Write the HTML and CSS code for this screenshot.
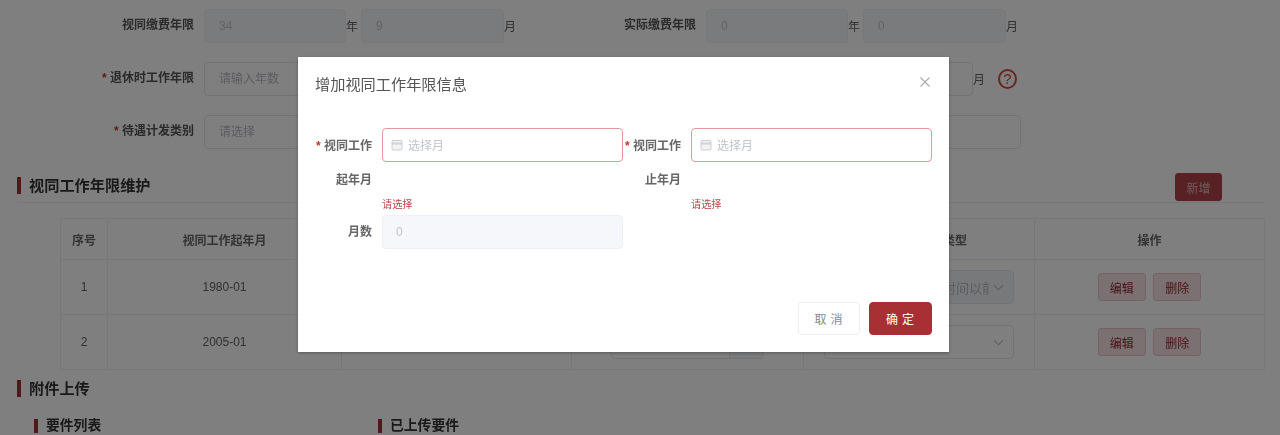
FILE: index.html
```html
<!DOCTYPE html>
<html lang="zh-CN">

<head>
  <title>视同工作年限信息</title>
  <meta charset="utf-8">
  <link rel="stylesheet" href="styles.css">
</head>

<body>
  <div class="screen">
    <div class="page">
      <div class="form-row">
        <label class="form-label">视同缴费年限</label>
        <input class="text-input short" type="text" value="34" disabled>
        <span class="unit">年</span>
        <input class="text-input short-b" type="text" value="9" disabled>
        <span class="unit">月</span>
        <label class="form-label second">实际缴费年限</label>
        <input class="text-input short" type="text" value="0" disabled>
        <span class="unit">年</span>
        <input class="text-input short-b" type="text" value="0" disabled>
        <span class="unit">月</span>
      </div>

      <div class="form-row">
        <label class="form-label"><em>*</em> 退休时工作年限</label>
        <input class="text-input wide" type="text" placeholder="请输入年数">
        <span class="unit">月</span>
        <span class="help-icon">?</span>
      </div>

      <div class="form-row">
        <label class="form-label"><em>*</em> 待遇计发类别</label>
        <input class="text-input wider" type="text" placeholder="请选择">
      </div>

      <div class="section-head">
        <h2 class="section-title">视同工作年限维护</h2>
        <button type="button" class="add-button">新增</button>
      </div>

      <table class="years-table">
        <colgroup>
          <col class="col-no">
          <col class="col-start">
          <col class="col-end">
          <col class="col-months">
          <col class="col-type">
          <col class="col-actions">
        </colgroup>
        <thead>
          <tr>
            <th>序号</th>
            <th>视同工作起年月</th>
            <th>视同工作止年月</th>
            <th>月数</th>
            <th>视同工作年限类型</th>
            <th>操作</th>
          </tr>
        </thead>
        <tbody>
          <tr>
            <td>1</td>
            <td>1980-01</td>
            <td>2004-12</td>
            <td></td>
            <td>
              <div class="cell-select disabled">
                <span class="cell-select-text">视同缴费参加工作时间以前</span>
                <svg class="chevron" viewBox="0 0 12 12"><path d="M1 3.5l5 5 5-5"/></svg>
              </div>
            </td>
            <td>
              <button type="button" class="row-button">编辑</button>
              <button type="button" class="row-button">删除</button>
            </td>
          </tr>
          <tr>
            <td>2</td>
            <td>2005-01</td>
            <td>2014-09</td>
            <td>
              <div class="cell-input"><span class="cell-input-end"></span></div>
            </td>
            <td>
              <div class="cell-select">
                <span class="cell-select-text"></span>
                <svg class="chevron" viewBox="0 0 12 12"><path d="M1 3.5l5 5 5-5"/></svg>
              </div>
            </td>
            <td>
              <button type="button" class="row-button">编辑</button>
              <button type="button" class="row-button">删除</button>
            </td>
          </tr>
        </tbody>
      </table>

      <h2 class="section-title upload-title">附件上传</h2>

      <div class="upload-columns">
        <h3 class="sub-title">要件列表</h3>
        <h3 class="sub-title">已上传要件</h3>
      </div>
    </div>

    <div class="mask"></div>

    <div class="dialog">
      <div class="dialog-head">
        <span class="dialog-title">增加视同工作年限信息</span>
        <svg class="dialog-close" viewBox="0 0 10 10"><path d="M.5.5l9 9M9.5.5l-9 9"/></svg>
      </div>

      <div class="dialog-body">
        <div class="dialog-field">
          <label class="dialog-label"><em>*</em> 视同工作起年月</label>
          <div class="dialog-control">
            <div class="date-input">
              <svg class="calendar" viewBox="0 0 12 12"><rect x="1" y="1.5" width="10" height="9.5" rx="1"/><path d="M1 4h10M1 5h10"/></svg>
              <span class="date-placeholder">选择月</span>
            </div>
            <div class="field-error">请选择</div>
          </div>
        </div>
        <div class="dialog-field">
          <label class="dialog-label"><em>*</em> 视同工作止年月</label>
          <div class="dialog-control">
            <div class="date-input">
              <svg class="calendar" viewBox="0 0 12 12"><rect x="1" y="1.5" width="10" height="9.5" rx="1"/><path d="M1 4h10M1 5h10"/></svg>
              <span class="date-placeholder">选择月</span>
            </div>
            <div class="field-error">请选择</div>
          </div>
        </div>
        <div class="dialog-field">
          <label class="dialog-label">月数</label>
          <div class="dialog-control">
            <input class="months-input" type="text" value="0" disabled>
          </div>
        </div>
      </div>

      <div class="dialog-foot">
        <button type="button" class="cancel-button">取消</button>
        <button type="button" class="ok-button">确定</button>
      </div>
    </div>
  </div>
</body>

</html>
```

FILE: styles.css
```css
* {
  box-sizing: border-box;
}

body {
  margin: 0;
  background: #fff;
  font-family: "Liberation Sans", "Noto Sans CJK SC", sans-serif;
  font-size: 12px;
  color: #333;
}

.screen {
  position: relative;
  height: 435px;
  overflow: hidden;
  filter: blur(0.6px);
}

.page {
  height: 435px;
  padding-top: 9px;
  overflow: hidden;
}

.mask {
  position: absolute;
  top: 0;
  left: 0;
  width: 100%;
  height: 100%;
  background: rgba(0, 0, 0, 0.5);
}

em {
  font-style: normal;
  color: #c0392b;
}

/* top form */
.form-row {
  display: flex;
  align-items: center;
  height: 34px;
  margin-bottom: 19px;
}

.form-label {
  width: 194px;
  margin-right: 10px;
  padding-bottom: 6px;
  text-align: right;
  font-weight: bold;
  color: #555;
}

.form-label.second {
  width: 177px;
}

.text-input {
  height: 34px;
  padding: 0 14px;
  border: 1px solid #e4e7ed;
  border-radius: 4px;
  background: #fff;
  font: inherit;
  color: #606266;
}

.text-input::placeholder {
  color: #b4b8c0;
}

.text-input:disabled {
  background: #f5f7fa;
  border-color: #eceef3;
  color: #c0c4cc;
}

.short {
  width: 142px;
}

.short-b {
  width: 143px;
}

.wide {
  width: 769px;
}

.wider {
  width: 817px;
}

.unit {
  width: 15px;
  padding-bottom: 2px;
  font-size: 12px;
  color: #606266;
}

.help-icon {
  width: 19px;
  height: 20px;
  margin-left: 10px;
  border: 2px solid #d8483c;
  border-radius: 50%;
  line-height: 16px;
  text-align: center;
  font-size: 15px;
  color: #d8483c;
}

/* sections */
.section-head {
  display: flex;
  align-items: center;
  justify-content: space-between;
  height: 36px;
  margin: -1px 15px 0 17px;
  padding: 6px 43px 1px 0;
  border-bottom: 1px solid #eee;
}

.section-title {
  margin: 0;
  padding-left: 8px;
  border-left: 4px solid #a82f33;
  font-size: 15.2px;
  line-height: 17px;
  color: #333;
}

.section-head .section-title {
  margin-bottom: 3px;
}

.add-button {
  width: 47px;
  height: 28px;
  padding: 0;
  border: 1px solid #b04449;
  border-radius: 3px;
  background: #b04449;
  font: inherit;
  font-size: 12px;
  color: #dcb8ba;
}

/* table */
.years-table {
  width: 1204px;
  margin: 15px 0 0 60px;
  table-layout: fixed;
  border-collapse: collapse;
  text-align: center;
}

.years-table th,
.years-table td {
  padding: 0;
  border: 1px solid #eee;
}

.years-table th {
  height: 41px;
  font-size: 12px;
  color: #666;
}

.years-table td {
  height: 55px;
  font-size: 12px;
  color: #606266;
}

.col-no {
  width: 47px;
}

.col-start {
  width: 234px;
}

.col-end {
  width: 230px;
}

.col-months {
  width: 232px;
}

.col-type {
  width: 231px;
}

.col-actions {
  width: 230px;
}

.cell-select {
  display: flex;
  align-items: center;
  justify-content: space-between;
  width: 190px;
  height: 34px;
  margin: 0 auto;
  padding: 0 9px 0 14px;
  border: 1px solid #e4e7ed;
  border-radius: 4px;
  background: #fff;
}

.cell-select.disabled {
  background: #f0f2f6;
  border-color: #e4e7ed;
  color: #b4b8c0;
}

.cell-select-text {
  width: 150px;
  overflow: hidden;
  white-space: nowrap;
  text-align: left;
  font-size: 13px;
}

.chevron {
  width: 11px;
  height: 11px;
  fill: none;
  stroke: #b4b8c0;
  stroke-width: 1.1;
}

.cell-input {
  display: flex;
  justify-content: flex-end;
  width: 153px;
  height: 34px;
  margin: 0 auto;
  border: 1px solid #e4e7ed;
  border-radius: 4px;
  background: #fff;
}

.cell-input-end {
  width: 34px;
  border-left: 1px solid #e4e7ed;
  background: #f5f7fa;
}

.row-button {
  width: 48px;
  height: 28px;
  margin: 0 2px;
  padding: 0;
  border: 1px solid #e9c4c8;
  border-radius: 3px;
  background: #f7e2e4;
  font: inherit;
  font-size: 12px;
  color: #8e2a30;
}

.upload-title {
  margin: 10px 0 0 17px;
}

.upload-columns {
  display: flex;
  margin: 22px 0 0 34px;
}

.sub-title {
  width: 344px;
  margin: 0;
  padding-left: 8px;
  border-left: 4px solid #a82f33;
  font-size: 13.8px;
  line-height: 14px;
  color: #333;
}

/* dialog */
.dialog {
  position: absolute;
  top: 57px;
  left: 298px;
  display: flex;
  flex-direction: column;
  width: 651px;
  height: 295px;
  background: #fff;
  box-shadow: 0 1px 3px rgba(0, 0, 0, 0.3);
}

.dialog-head {
  display: flex;
  align-items: center;
  justify-content: space-between;
  height: 54px;
  padding: 0 19px 0 17px;
}

.dialog-title {
  margin-bottom: 2px;
  font-size: 15.2px;
  color: #555;
}

.dialog-close {
  width: 10px;
  height: 10px;
  margin-bottom: 4px;
  fill: none;
  stroke: #a8abb2;
  stroke-width: 1.1;
}

.dialog-body {
  display: grid;
  grid-template-columns: 309px 309px;
  align-content: start;
  height: 191px;
  padding: 17px 0 0 16px;
}

.dialog-field {
  display: flex;
}

.dialog-label {
  flex: none;
  width: 58px;
  margin-right: 10px;
  padding-top: 1px;
  line-height: 34px;
  text-align: right;
  font-size: 12px;
  font-weight: bold;
  color: #666;
}

.dialog-field:last-child .dialog-label {
  padding-top: 0;
}

.dialog-control {
  width: 241.5px;
}

.date-input {
  display: flex;
  align-items: center;
  height: 34px;
  padding-left: 8px;
  border: 1px solid #e09a9c;
  border-radius: 4px;
  background: #fff;
}

.calendar {
  width: 12px;
  height: 12px;
  margin-right: 5px;
  fill: #f2f3f5;
  stroke: #c0c4cc;
  stroke-width: 0.8;
}

.date-placeholder {
  padding-bottom: 1px;
  color: #c0c4cc;
}

.field-error {
  height: 53px;
  padding-top: 37px;
  font-size: 10.2px;
  line-height: 12px;
  color: #b8474b;
}

.months-input {
  width: 100%;
  height: 34px;
  padding: 0 13px;
  border: 1px solid #eef0f5;
  border-radius: 4px;
  background: #f5f7fa;
  font: inherit;
  color: #c0c4cc;
}

.dialog-foot {
  display: flex;
  justify-content: flex-end;
  gap: 9px;
  padding-right: 17px;
}

.cancel-button,
.ok-button {
  height: 33px;
  padding: 0 0 1px 3px;
  border-radius: 4px;
  font: inherit;
  font-size: 12px;
  letter-spacing: 4px;
}

.cancel-button {
  width: 62px;
  border: 1px solid #eceef1;
  background: #fff;
  color: #888;
}

.ok-button {
  width: 63px;
  border: 1px solid #a82f33;
  background: #a82f33;
  color: #fff;
}
```
